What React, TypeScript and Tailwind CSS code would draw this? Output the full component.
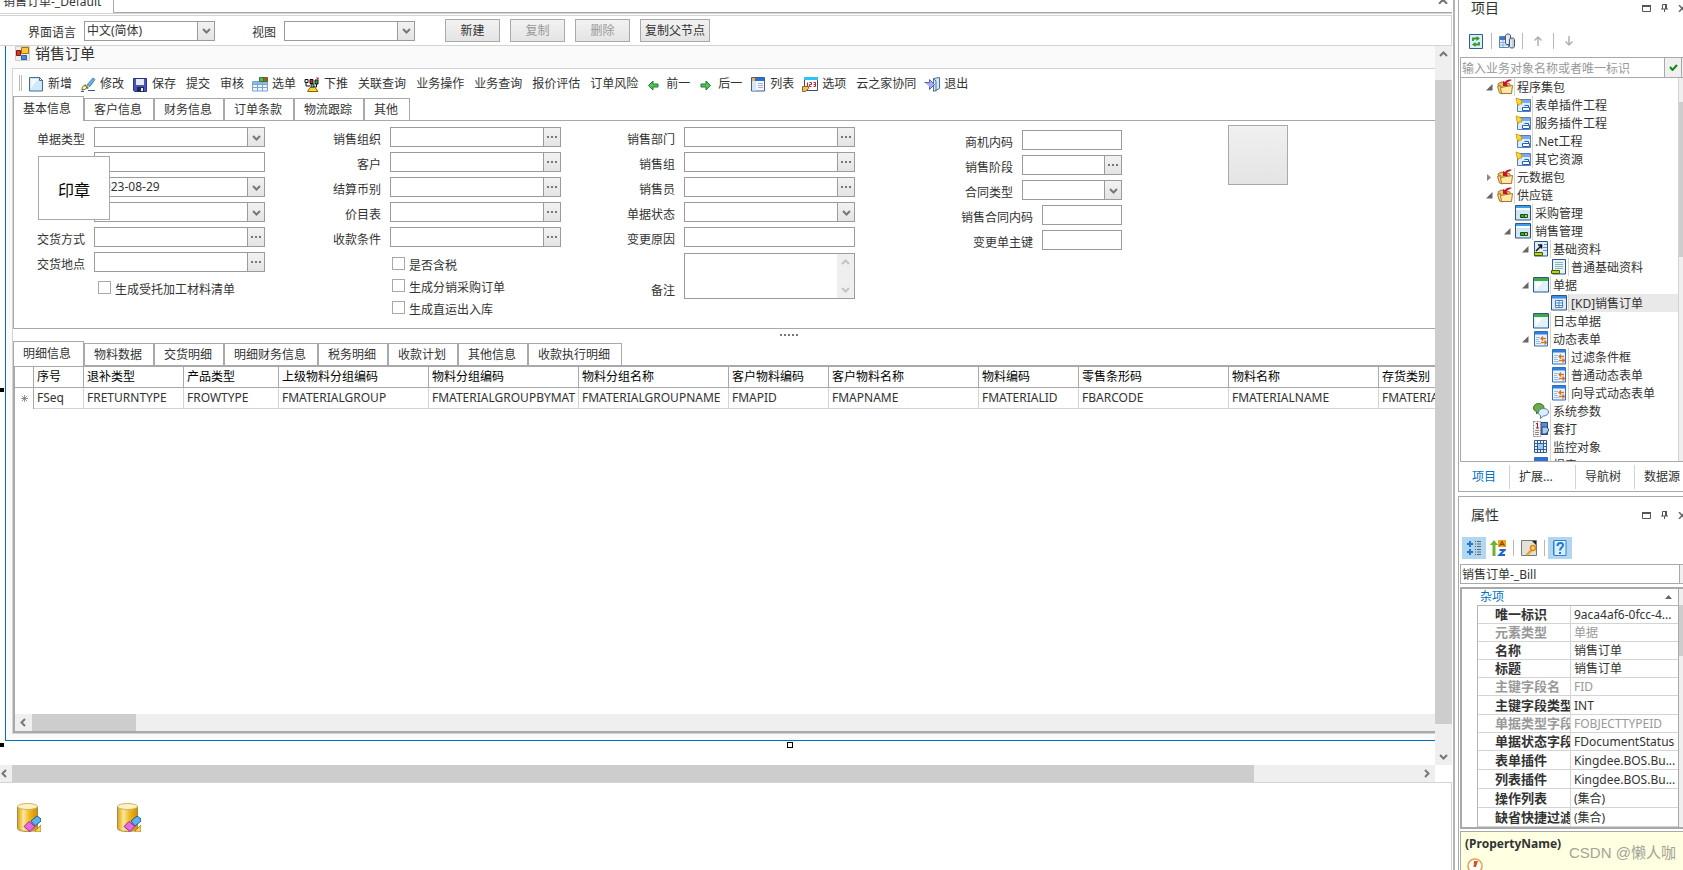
import React from "react";

/* ---------- icons ---------- */

type SvgProps = { children: React.ReactNode; box?: string; className?: string };

const Svg = ({ children, box = "0 0 16 16", className = "h-4 w-4" }: SvgProps) => (
  <svg viewBox={box} className={`${className} shrink-0`} aria-hidden="true">
    {children}
  </svg>
);

const icons: Record<string, React.ReactNode> = {
  page: (
    <Svg>
      <path d="M1.5 1.5h10l3 3v10.5h-13z" fill="#cfe8fb" stroke="#4b6a8c" />
      <path d="M3 3h7l-7 9z" fill="#f2faff" />
      <path d="M11.5 1.5v3h3z" fill="#fff" stroke="#4b6a8c" />
    </Svg>
  ),
  brush: (
    <Svg>
      <path d="M7 9l6-7 2 1.5-5 7z" fill="#6fb2d8" stroke="#3a6fa0" strokeWidth=".8" />
      <path d="M5 8l4 4-2 1-3-3z" fill="#4f8f3a" />
      <path d="M2 14c0-4 2-5 4-4 2 1 0 4-4 4z" fill="#fff2c0" stroke="#6b5a20" />
      <path d="M1 15.5h3M8 14.5h7" stroke="#3a5f95" />
    </Svg>
  ),
  save: (
    <Svg>
      <path d="M1.5 2.5h13v13h-12l-1-1z" fill="#4a55b8" stroke="#2b3480" />
      <path d="M4 3h8v6H4z" fill="#e4eafc" />
      <path d="M5 11h7v4.5H5z" fill="#20264f" />
      <path d="M9 12h2v3H9z" fill="#e8ecff" />
    </Svg>
  ),
  pick: (
    <Svg>
      <path d="M.5 5.5h15v9.5H.5z" fill="#eaf5ff" stroke="#7fa3cf" />
      <path d="M1 6h14v2H1z" fill="#8db9ee" />
      <path d="M.5 8.5h15M.5 11.5h15M5.5 5.5v9.5M10.5 5.5v9.5" stroke="#7fa3cf" fill="none" />
      <path d="M7.5 1.5h4v4h-4z" fill="#58b947" stroke="#2c7a2a" />
      <path d="M11.5 1.5h4v4h-4z" fill="#e23a2c" stroke="#2c7a2a" />
    </Svg>
  ),
  push: (
    <Svg>
      <path d="M1 3.5h3v3H1z" fill="#fff" stroke="#111" />
      <path d="M6 3.5h3v4H6z" fill="#e32a1c" stroke="#111" />
      <path d="M11 4h3v4h-3z" fill="#1fb43a" stroke="#111" />
      <path d="M2 7v3h4M7.5 8v4M12.5 8v3H9" stroke="#111" fill="none" />
      <path d="M7 8h3v3H7z" fill="#2ad2e6" stroke="#111" strokeWidth=".8" />
      <path d="M12 1l3 1-1 3z" fill="#c33" />
      <path d="M3.5 15.5L6 11.5h5l3 4z" fill="#ffd42a" stroke="#8a6500" />
    </Svg>
  ),
  prev: (
    <Svg>
      <path d="M2.5 9.500L7 5v3h5v3H7v3z" fill="#4fc45a" stroke="#1f7d2b" />
    </Svg>
  ),
  next: (
    <Svg>
      <path d="M12.500 9.500L8 5v3H3v3h5v3z" fill="#4fc45a" stroke="#1f7d2b" />
    </Svg>
  ),
  list: (
    <Svg>
      <path d="M1.5 1.5h13v13.5h-13z" fill="#f4f8fe" stroke="#3d5f93" />
      <path d="M2 2h12v3H2z" fill="#2f6fd0" />
      <path d="M2 2h3v3H2z" fill="#f6b53a" />
      <path d="M2 5h4v9.5H2z" fill="#d5e4f8" />
      <path d="M8 7.5h5M8 9.5h5M8 11.5h5" stroke="#9fb2cc" />
    </Svg>
  ),
  options: (
    <Svg>
      <path d="M2.5 1.5h13v13h-13z" fill="#fff" stroke="#2f4d7d" />
      <path d="M2 1h14v3H2z" fill="#2bc6f0" />
      <path d="M5.5 6.5v4M7.5 6.500h2v2h-2v2h2M11.5 6.500h2v4h-2M11.5 8.500h2" stroke="#c81e2a" fill="none" />
      <path d="M.5 10.500h6v2l-3 3h-3z" fill="#f0bf5a" stroke="#8d651c" />
    </Svg>
  ),
  exit: (
    <Svg>
      <path d="M9.5 2.500l6-1v11l-6 3z" fill="#d5ebfb" stroke="#4a6f9d" />
      <path d="M9.5 2.500L12 5v10.500" fill="none" stroke="#4a6f9d" />
      <path d="M.5 6.500h5v-3l5 5-5 5v-3" fill="#a9a9f0" stroke="#5a5fc8" />
    </Svg>
  ),
  form: (
    <Svg>
      <path d="M.5 .5h14v14H.5z" fill="#eee" stroke="#ccc" />
      <path d="M6.5 1.5h7v6h-7z" fill="#ffc83a" stroke="#a87400" />
      <path d="M1.5 4.5h4v5h-4z" fill="#d6362b" stroke="#7e1510" />
      <path d="M6.5 9.5h5v4h-5z" fill="#4a8be0" stroke="#2b60b0" />
    </Svg>
  ),
  refresh: (
    <Svg>
      <path d="M1.5 1.5h13v14h-13z" fill="#dcefff" stroke="#2e5f8a" />
      <path d="M5 8V5.500h4M11 9v2.500H7" stroke="#2e9a22" strokeWidth="1.800" fill="none" />
      <path d="M8.500 3v5L12 5.500zM7.500 9v5L4 11.500z" fill="#2e9a22" />
    </Svg>
  ),
  servers: (
    <Svg>
      <path d="M.5 3.5h9v11h-9z" fill="#e9f3ff" stroke="#5f83b8" />
      <path d="M1 4h8v3H1z" fill="#3c78cf" />
      <path d="M1 9.5h8M1 12h8M4 7v7" stroke="#8faedb" />
      <path d="M6.5 2.5c0-2 5-2 5 0v8c0 1.500-5 1.500-5 0z" fill="#d7e1ea" stroke="#44566c" />
      <path d="M10.5 6.500c0-2 5-2 5 0v7c0 2-5 2-5 0z" fill="#c2ceda" stroke="#44566c" />
      <path d="M8 3v7M12 7v7" stroke="#fff" />
    </Svg>
  ),
  up: (
    <Svg>
      <path d="M8 13V4M4.5 7.500L8 4l3.500 3.500" stroke="#b0b0b0" strokeWidth="1.500" fill="none" />
    </Svg>
  ),
  down: (
    <Svg>
      <path d="M8 3v9M4.5 8.500L8 12l3.500-3.500" stroke="#b0b0b0" strokeWidth="1.500" fill="none" />
    </Svg>
  ),
  folder: (
    <Svg>
      <path d="M1 5l3-2 9 2v9H3z" fill="#f3c55e" stroke="#a8742a" />
      <path d="M.5 7.500l3-1 2 8.500-3-1z" fill="#f9d987" stroke="#a8742a" />
      <path d="M3.500 8.500l12-2-1 8h-10z" fill="#ffe9a8" stroke="#a8742a" />
      <path d="M15 1c-3-1-6 0-7 2L6 2v5h5L9.500 4.500C11 2.500 13 2 15 1z" fill="#c8142a" />
    </Svg>
  ),
  plugin: (
    <Svg>
      <path d="M2.5 2.5h13v12h-13z" fill="#dcecff" stroke="#5b7fb5" />
      <path d="M3 3h12v3H3z" fill="#7fa8ea" />
      <path d="M7.5 10.500h7v3h-7zM9.500 8.500h4v2" fill="#fff" stroke="#1f5fc0" />
      <path d="M1 1l3 1 3 2-1 2 1 1H4l-1 2-1-3z" fill="#ffd92e" stroke="#b88c00" strokeWidth=".7" />
    </Svg>
  ),
  module: (
    <Svg>
      <path d="M.5 .5h15v14.500H.5z" fill="#d3e6f8" stroke="#2e5583" />
      <path d="M1 1h14v2H1z" fill="#3aa0ea" />
      <path d="M1 3h14v2H1z" fill="#f5fbff" />
      <path d="M5.5 9.500h4v3h-4z" fill="#2fa82f" stroke="#145214" />
      <path d="M9.500 9.500h3v3h-3z" fill="#e0c23a" stroke="#145214" />
    </Svg>
  ),
  base: (
    <Svg>
      <path d="M1.5 .5h13v14.500h-13z" fill="#dcecfa" stroke="#2e5583" />
      <path d="M11 3.500h3M10 6.500h4M10 9.500h4" stroke="#6f94bd" />
      <path d="M3 10l5-5M5 4h3.500v3.500" stroke="#111" strokeWidth="1.500" fill="none" />
      <path d="M1.500 11.500h8v3h-8z" fill="#b6d41c" stroke="#4a5d08" />
    </Svg>
  ),
  baseItem: (
    <Svg>
      <path d="M1.5 .5h13v14.500h-13z" fill="#e6f4ff" stroke="#2e5583" />
      <path d="M4 3.500h8M4 5.500h8M4 7.500h8M4 9.500h8" stroke="#8cb4a8" />
      <path d="M.5 11.500h8v3h-8z" fill="#b6d41c" stroke="#4a5d08" />
    </Svg>
  ),
  bill: (
    <Svg>
      <path d="M.5 .5h15v14.500H.5z" fill="#dff1fc" stroke="#2e5583" />
      <path d="M1 1h14v3H1z" fill="#43a847" />
      <path d="M2 5h8L3 13z" fill="#fafeff" />
    </Svg>
  ),
  billItem: (
    <Svg>
      <path d="M.5 .5h15v14.500H.5z" fill="#dceafb" stroke="#2e5583" />
      <path d="M1 1h14v2.500H1z" fill="#3d8fe0" />
      <path d="M4.500 5.500h7v7h-7zM4.500 8h7M4.500 10.500h7M8 5.500v7" fill="#fff" stroke="#4a83c8" />
    </Svg>
  ),
  dyn: (
    <Svg>
      <path d="M1.5 .5h13v14.500h-13z" fill="#eaf4ff" stroke="#2f6fc0" />
      <path d="M2 1h12v2.500H2z" fill="#2e7fe0" />
      <path d="M3 6.500h4M3 8.500h3M3 10.500h4M3 12.500h5" stroke="#9dbbe0" />
      <path d="M13 7.500H8M10 5.500l-2 2 2 2M8 11.500h5M11.500 9.500l2 2-2 2" stroke="#d9741a" strokeWidth="1.300" fill="none" />
    </Svg>
  ),
  chat: (
    <Svg>
      <path d="M5.5 .5c3 0 5.500 1.500 5.500 4s-2.500 4.500-5.500 4.500l-2 2V8.500C1.500 8 .5 6.500.5 5c0-2.500 2-4.500 5-4.500z" fill="#6bab49" stroke="#3d7325" />
      <path d="M10.5 5.500c3 0 5 1.500 5 3.500s-2 4-5 4l-3 2.500V12.500c-1.500-.5-2-1.500-2-3C5.500 7 7.500 5.500 10.500 5.500z" fill="#dcedfb" stroke="#4d7dab" />
    </Svg>
  ),
  print: (
    <Svg>
      <path d="M8 1.500h6.500v12H8z" fill="#5a8fd8" stroke="#24467c" />
      <path d="M9 6h5l2 3-3 4H9z" fill="#a9cbf2" stroke="#24467c" />
      <path d="M.5 .5h7v15h-7z" fill="#f5f5f5" stroke="#888" strokeDasharray="2 1" />
      <path d="M3 3l1.500-1v5M3 7h3" stroke="#b01030" fill="none" />
      <path d="M2 9.500h4M2 11.500h4M2 13.500h4" stroke="#888" />
    </Svg>
  ),
  monitor: (
    <Svg>
      <path d="M1.5 1.5h12v12h-12z" fill="#eef6ff" stroke="#2f5c94" />
      <path d="M1.5 4.500h12M1.500 7.500h12M1.500 10.500h12M4.500 1.500v12M7.500 1.500v12M10.500 1.500v12" stroke="#2f5c94" />
      <path d="M5 5h5v5H5z" fill="#9cc6f6" />
    </Svg>
  ),
  blue: (
    <Svg>
      <path d="M1.5 .5h13v14h-13z" fill="#eaf4ff" stroke="#2f6fc0" />
      <path d="M2 1h12v4H2z" fill="#2e6fe0" />
    </Svg>
  ),
  categorized: (
    <Svg>
      <path d="M1 4h6M4 1v6M1 12h6M4 9v6" stroke="#1f78d8" strokeWidth="2" />
      <path d="M9 1.500h1M9 4h1M9 6.500h1M9 9.500h1M9 12h1M9 14.500h1M11 1.500h4M11 4h4M11 6.500h4M11 9.500h4M11 12h4M11 14.500h4" stroke="#666" />
    </Svg>
  ),
  sort: (
    <Svg>
      <path d="M4 0l4 5H5.500v11h-3V5H0z" fill="#6cb52a" />
      <path d="M8 0h8v7H8z" fill="#f3a41c" />
      <path d="M9.500 6L12 1.500 14.500 6M10.500 4.500h3" stroke="#8a4b00" strokeWidth="1.200" fill="none" />
      <path d="M9.500 10h5l-5 5h5.500" stroke="#1d66c8" strokeWidth="2" fill="none" />
    </Svg>
  ),
  keyPage: (
    <Svg>
      <path d="M.5 .5h15v15H.5z" fill="#e2e0d8" stroke="#777" />
      <path d="M11 1h4v4z" fill="#222" />
      <path d="M10 9l-5 5 1 1.500 2-1 4-4z" fill="#f0a020" />
      <circle cx="12" cy="8" r="2.500" fill="#ffd27a" stroke="#d88a18" strokeWidth="1.500" />
    </Svg>
  ),
  help: (
    <Svg>
      <path d="M2 .5h12v15H2z" fill="#dceeff" stroke="#2b84dc" />
      <path d="M1.500 1v14" stroke="#2b84dc" />
      <path d="M5.500 6c0-4 6-4 5.500-.5C10.800 7.500 8 7.500 8 10.500" stroke="#1878dc" strokeWidth="2" fill="none" />
      <path d="M7 12h2v2H7z" fill="#1878dc" />
    </Svg>
  ),
};

const Chevron = ({ dir, light }: { dir: "up" | "down" | "left" | "right"; light?: boolean }) => {
  const paths = {
    up: "M1 6l3.500-3.500L8 6",
    down: "M1 3l3.500 3.500L8 3",
    left: "M6 1L2.500 4.500 6 8",
    right: "M3 1l3.500 3.500L3 8",
  };
  return (
    <Svg box="0 0 9 9" className="h-[9px] w-[9px]">
      <path d={paths[dir]} fill="none" stroke={light ? "#c4c4c4" : "#777"} strokeWidth="2" />
    </Svg>
  );
};

const Database = () => (
  <svg viewBox="0 0 24 29" className="h-[29px] w-6" aria-hidden="true">
    <defs>
      <linearGradient id="gold">
        <stop offset="0" stopColor="#e0a010" />
        <stop offset=".3" stopColor="#fbe79a" />
        <stop offset=".6" stopColor="#f0b820" />
        <stop offset="1" stopColor="#d09000" />
      </linearGradient>
    </defs>
    <path d="M.5 3.500v22c0 4 20 4 20 0v-22z" fill="url(#gold)" stroke="#a88a48" />
    <ellipse cx="10.500" cy="3.500" rx="10" ry="3" fill="#fff3c0" stroke="#c9b070" />
    <path d="M14 18l6-5 4 3v2l-6 5z" fill="#5fb0ee" stroke="#1c5c9c" />
    <path d="M18 28l6-6v7h-6z" fill="#f3d26a" stroke="#b78b20" />
    <path d="M7 23.500l5-5 6 5-5 5z" fill="#e66ae0" stroke="#a02aa0" />
  </svg>
);

/* ---------- form controls ---------- */

const boxClass = "flex h-5 border border-[#9b9b9b] bg-white";
const cellClass =
  "flex w-[17px] shrink-0 items-center justify-center border-l border-[#9b9b9b] bg-linear-to-b from-[#f2f2f2] to-[#e4e4e4]";

type Kind = "text" | "select" | "lookup" | "date";

const Control = ({ id, kind, width, value = "", name }: { id: string; kind: Kind; width: string; value?: string; name?: string }) => {
  const inner = "min-w-0 flex-1 appearance-none bg-transparent px-[2px] leading-[18px] outline-none";
  return (
    <div className={`${boxClass} ${width}`}>
      {kind === "select" ? (
        <select id={id} aria-label={name} className={inner} defaultValue={value}>
          <option>{value}</option>
        </select>
      ) : (
        <input id={id} aria-label={name} className={inner} defaultValue={value} />
      )}
      {(kind === "select" || kind === "date") && (
        <span className={cellClass}>
          <Chevron dir="down" />
        </span>
      )}
      {kind === "lookup" && (
        <button type="button" aria-label="…" className={cellClass}>
          <Svg box="0 0 10 2" className="h-[2px] w-[10px]">
            <path d="M0 0h2v2H0zM4 0h2v2H4zM8 0h2v2H8z" fill="#777" />
          </Svg>
        </button>
      )}
    </div>
  );
};

type FieldDef = { label: string; kind: Kind; value?: string; narrow?: boolean; name?: string };

const Field = ({ def, id, labelWidth, width }: { def: FieldDef; id: string; labelWidth: string; width: string }) => (
  <div className="flex h-5">
    <label htmlFor={id} className={`${labelWidth} shrink-0 pt-[5px] pr-[9px] text-right leading-4`}>
      {def.label}
    </label>
    <Control id={id} kind={def.kind} width={width} value={def.value} name={def.name} />
  </div>
);

const Check = ({ label }: { label: string }) => (
  <label className="flex h-[13px] items-start gap-1">
    <input type="checkbox" className="h-[13px] w-[13px] appearance-none border border-[#a8a8a8] bg-white" />
    <span className="pt-px leading-4">{label}</span>
  </label>
);

const col1: FieldDef[] = [
  { label: "单据类型", kind: "select" },
  { label: "", kind: "text", name: "单据编号" },
  { label: "", kind: "date", value: "2023-08-29", name: "日期" },
  { label: "", kind: "select", name: "类型" },
  { label: "交货方式", kind: "lookup" },
  { label: "交货地点", kind: "lookup" },
];
const col2: FieldDef[] = [
  { label: "销售组织", kind: "lookup" },
  { label: "客户", kind: "lookup" },
  { label: "结算币别", kind: "lookup" },
  { label: "价目表", kind: "lookup" },
  { label: "收款条件", kind: "lookup" },
];
const col3: FieldDef[] = [
  { label: "销售部门", kind: "lookup" },
  { label: "销售组", kind: "lookup" },
  { label: "销售员", kind: "lookup" },
  { label: "单据状态", kind: "select" },
  { label: "变更原因", kind: "text" },
];
const col4: FieldDef[] = [
  { label: "商机内码", kind: "text" },
  { label: "销售阶段", kind: "lookup" },
  { label: "合同类型", kind: "select" },
  { label: "销售合同内码", kind: "text", narrow: true },
  { label: "变更单主键", kind: "text", narrow: true },
];

/* ---------- tabs, toolbar, grid ---------- */

const TabStrip = ({ tabs }: { tabs: string[] }) => (
  <div role="tablist" className="flex h-[25px] shrink-0 items-end">
    {tabs.map((tab, i) => (
      <button
        key={tab}
        type="button"
        role="tab"
        aria-selected={i === 0}
        className={
          i === 0
            ? "h-[25px] shrink-0 border-x border-t border-[#a9a9a9] bg-white pr-3 pl-[9px] leading-6"
            : "h-[23px] shrink-0 border border-[#a9a9a9] bg-white pr-[11px] pl-[9px] leading-[22px]"
        }
      >
        {tab}
      </button>
    ))}
    <div className="h-px flex-1 bg-[#a9a9a9]" />
  </div>
);

const tools: [string, string?][] = [
  ["新增", "page"],
  ["修改", "brush"],
  ["保存", "save"],
  ["提交"],
  ["审核"],
  ["选单", "pick"],
  ["下推", "push"],
  ["关联查询"],
  ["业务操作"],
  ["业务查询"],
  ["报价评估"],
  ["订单风险"],
  ["前一", "prev"],
  ["后一", "next"],
  ["列表", "list"],
  ["选项", "options"],
  ["云之家协同"],
  ["退出", "exit"],
];

const columns: [string, string, string][] = [
  ["序号", "FSeq", "w-[50px]"],
  ["退补类型", "FRETURNTYPE", "w-[100px]"],
  ["产品类型", "FROWTYPE", "w-[95px]"],
  ["上级物料分组编码", "FMATERIALGROUP", "w-[150px]"],
  ["物料分组编码", "FMATERIALGROUPBYMAT", "w-[150px]"],
  ["物料分组名称", "FMATERIALGROUPNAME", "w-[150px]"],
  ["客户物料编码", "FMAPID", "w-[100px]"],
  ["客户物料名称", "FMAPNAME", "w-[150px]"],
  ["物料编码", "FMATERIALID", "w-[100px]"],
  ["零售条形码", "FBARCODE", "w-[150px]"],
  ["物料名称", "FMATERIALNAME", "w-[150px]"],
  ["存货类别", "FMATERIALTYPE", "w-[150px]"],
];

const EntryGrid = () => (
  <div className="flex min-h-0 flex-1 flex-col overflow-hidden border-t border-b-2 border-l-2 border-[#a9a9a9] bg-white">
    <div className="min-h-0 flex-1 overflow-hidden">
      <table className="w-[1514px] table-fixed border-separate border-spacing-0 text-left">
        <thead>
          <tr className="text-black">
            <th className="h-[21px] w-[19px] border-r border-b border-[#a9a9a9]" />
            {columns.map(([title, , width]) => (
              <th key={title} className={`${width} overflow-hidden border-r border-b border-[#a9a9a9] px-[3px] font-normal whitespace-nowrap`}>
                {title}
              </th>
            ))}
          </tr>
        </thead>
        <tbody>
          <tr>
            <td className="h-[21px] border-r border-[#a9a9a9]">
              <Svg box="0 0 9 9" className="ml-[6px] h-[7px] w-[7px]">
                <path d="M4.500 0v9M0 4.500h9M1 1l7 7M8 1L1 8" stroke="#777" />
              </Svg>
            </td>
            {columns.map(([title, field]) => (
              <td key={title} className="overflow-hidden border-r border-b border-[#d4d4d4] px-[3px] whitespace-nowrap">
                {field}
              </td>
            ))}
          </tr>
        </tbody>
      </table>
    </div>
    <div className="flex h-[17px] shrink-0 bg-[#efefef]">
      <span className="flex w-[17px] items-center justify-center">
        <Chevron dir="left" />
      </span>
      <span className="w-[104px] bg-[#cdcdcd]" />
    </div>
  </div>
);

const BillForm = () => (
  <div className="relative flex h-[208px] shrink-0 border-b border-l border-[#a9a9a9]">
    <div className="flex shrink-0 flex-col gap-[5px] pt-[6px]">
      {col1.map((def, i) => (
        <Field key={i} def={def} id={`a${i}`} labelWidth="w-20" width="w-[171px]" />
      ))}
      <div className="pt-1 pl-[84px]">
        <Check label="生成受托加工材料清单" />
      </div>
    </div>
    <div className="flex shrink-0 flex-col gap-[5px] pt-[6px]">
      {col2.map((def, i) => (
        <Field key={i} def={def} id={`b${i}`} labelWidth="w-[125px]" width="w-[171px]" />
      ))}
      <div className="flex flex-col gap-[9px] pt-[5px] pl-[127px]">
        <Check label="是否含税" />
        <Check label="生成分销采购订单" />
        <Check label="生成直运出入库" />
      </div>
    </div>
    <div className="flex shrink-0 flex-col gap-[5px] pt-[6px]">
      {col3.map((def, i) => (
        <Field key={i} def={def} id={`c${i}`} labelWidth="w-[123px]" width="w-[171px]" />
      ))}
      <div className="flex items-end pt-px">
        <label htmlFor="remark" className="w-[123px] pr-[9px] text-right leading-4">
          备注
        </label>
        <div className="flex h-[46px] w-[171px] border border-[#9b9b9b]">
          <textarea id="remark" className="min-w-0 flex-1 resize-none outline-none" />
          <span className="flex w-[17px] flex-col items-center justify-between bg-[#efefef] py-1">
            <Chevron dir="up" light />
            <Chevron dir="down" light />
          </span>
        </div>
      </div>
    </div>
    <div className="flex shrink-0 flex-col gap-[5px] pt-[9px]">
      {col4.map((def, i) => (
        <Field
          key={i}
          def={def}
          id={`d${i}`}
          labelWidth={def.narrow ? "w-[187px]" : "w-[167px]"}
          width={def.narrow ? "w-20" : "w-[100px]"}
        />
      ))}
    </div>
    <button
      type="button"
      aria-label="图片"
      className="mt-1 ml-[106px] h-[60px] w-[60px] shrink-0 border border-[#a9a9a9] bg-linear-to-b from-[#f0f0f0] to-[#e4e4e4]"
    />
    <div className="absolute top-[35px] left-6 flex h-16 w-[72px] items-center justify-center border border-[#a9a9a9] bg-white pt-1 text-base text-black">
      印章
    </div>
  </div>
);

const pushButton = "h-[23px] shrink-0 border border-[#a9a9a9] bg-linear-to-b from-[#f2f2f2] to-[#e4e4e4] leading-[22px]";

const Designer = () => (
  <main className="flex min-w-0 flex-1 flex-col border-r-2 border-[#b4b4b4] pr-px">
    <div className="flex h-[13px] shrink-0">
      <div className="flex w-[114px] items-end overflow-hidden border-r border-[#a9a9a9] pb-[3px] pl-[3px] leading-4 whitespace-nowrap">销售订单-_Default</div>
      <div className="flex flex-1 items-start justify-end overflow-hidden border-b border-[#a9a9a9] pr-1">
        <Svg box="0 5 10 4" className="h-1 w-[10px]">
          <path d="M1 0l8 9M9 0L1 9" stroke="#777" strokeWidth="2" />
        </Svg>
      </div>
    </div>
    <div className="h-px shrink-0 bg-[#d4d4d4]" />
    <div className="mt-px flex h-[31px] shrink-0 items-center border-y border-r border-[#d4d4d4]">
      <label htmlFor="lang" className="w-[84px] pt-1 pr-2 text-right">
        界面语言
      </label>
      <Control id="lang" kind="select" width="w-[131px]" value="中文(简体)" />
      <label htmlFor="view" className="w-[69px] pt-1 pr-2 text-right">
        视图
      </label>
      <Control id="view" kind="select" width="w-[131px]" />
      <div className="ml-[30px] flex gap-[10px]">
        <button type="button" className={`${pushButton} w-[55px]`}>新建</button>
        <button type="button" disabled className={`${pushButton} w-[55px] text-[#999]`}>复制</button>
        <button type="button" disabled className={`${pushButton} w-[55px] text-[#999]`}>删除</button>
        <button type="button" className={`${pushButton} w-[70px]`}>复制父节点</button>
      </div>
    </div>

    <div className="flex min-h-0 flex-1">
      <div className="relative flex min-w-0 flex-1 flex-col overflow-hidden pb-6 pl-[5px]">
        <div className="flex min-h-0 flex-1 flex-col border-b border-l border-[#0072c6] bg-[#fafafa] pb-[6px] pl-[6px]">
          <div className="flex h-[22px] shrink-0 items-start gap-1 pl-[3px]">
            {icons.form}
            <h1 className="text-[15px] leading-[14px]">销售订单</h1>
          </div>
          <div className="flex min-h-0 flex-1 flex-col border-t border-b border-l border-[#d4d4d4] bg-white">
            <div role="toolbar" className="flex h-[27px] shrink-0 items-center overflow-hidden pl-[6px]">
              <span className="mr-[3px] h-4 w-[3px] shrink-0 border-x border-[#bbb]" />
              {tools.map(([label, icon]) => (
                <button
                  key={label}
                  type="button"
                  className={`flex shrink-0 items-center gap-1 pt-[3px] pr-[5px] leading-5 ${icon ? "pl-[3px]" : "pl-[5px]"}`}
                >
                  {icon && icons[icon]}
                  {label}
                </button>
              ))}
            </div>
            <TabStrip tabs={["基本信息", "客户信息", "财务信息", "订单条款", "物流跟踪", "其他"]} />
            <BillForm />
            <div className="flex h-3 shrink-0 items-center justify-center">
              <Svg box="0 0 18 2" className="mr-[-130px] h-[2px] w-[18px]">
                <path d="M0 0h2v2H0zM4 0h2v2H4zM8 0h2v2H8zM12 0h2v2h-2zM16 0h2v2h-2z" fill="#777" />
              </Svg>
            </div>
            <TabStrip tabs={["明细信息", "物料数据", "交货明细", "明细财务信息", "税务明细", "收款计划", "其他信息", "收款执行明细"]} />
            <EntryGrid />
          </div>
        </div>
        <span className="absolute top-[342px] left-0 h-1 w-1 bg-black" />
        <span className="absolute bottom-[18px] left-0 h-1 w-1 bg-black" />
        <span className="absolute bottom-[17px] left-[787px] h-[6px] w-[6px] border border-black bg-white" />
      </div>
      <div className="flex w-[17px] shrink-0 flex-col items-center bg-[#efefef]">
        <span className="flex h-[34px] pt-1">
          <Chevron dir="up" />
        </span>
        <span className="w-full flex-1 bg-[#cdcdcd]" />
        <span className="flex h-[41px] items-end pb-1">
          <Chevron dir="down" />
        </span>
      </div>
    </div>
    <div className="mr-[17px] flex h-[17px] shrink-0 items-center bg-[#efefef]">
      <span className="w-3">
        <Chevron dir="left" />
      </span>
      <span className="h-full flex-1 bg-[#cdcdcd]" />
      <span className="flex w-[181px] justify-end pr-1">
        <Chevron dir="right" />
      </span>
    </div>
    <div className="flex h-[88px] shrink-0 gap-[76px] border-t border-r border-[#d4d4d4] pt-5 pl-[17px]">
      <Database />
      <Database />
    </div>
  </main>
);

/* ---------- side panels ---------- */

const PanelTitle = ({ title }: { title: string }) => (
  <div className="flex items-center justify-between pr-[9px] pl-3">
    <h2 className="text-sm leading-4">{title}</h2>
    <div className="flex items-center gap-[10px]">
      <button type="button" aria-label="最大化">
        <Svg box="0 0 9 7" className="h-[7px] w-[9px]">
          <path d="M.5 1h8v5.500h-8z" fill="none" stroke="#555" />
          <path d="M0 0h9v2H0z" fill="#555" />
        </Svg>
      </button>
      <button type="button" aria-label="固定">
        <Svg box="0 0 7 8" className="h-2 w-[7px]">
          <path d="M1.500 5V.500h4V5M0 5h7M3.500 5v3" fill="none" stroke="#555" />
          <path d="M4 0h2v5H4z" fill="#555" />
        </Svg>
      </button>
      <button type="button" aria-label="关闭">
        <Svg box="0 0 8 7" className="h-[7px] w-2">
          <path d="M1 0l6 7M7 0L1 7" stroke="#666" strokeWidth="1.500" />
        </Svg>
      </button>
    </div>
  </div>
);

type Node = { label: string; icon: string; level: 1 | 2 | 3 | 4; open?: boolean; closed?: boolean; selected?: boolean };

const nodes: Node[] = [
  { label: "程序集包", icon: "folder", level: 1, open: true },
  { label: "表单插件工程", icon: "plugin", level: 2 },
  { label: "服务插件工程", icon: "plugin", level: 2 },
  { label: ".Net工程", icon: "plugin", level: 2 },
  { label: "其它资源", icon: "plugin", level: 2 },
  { label: "元数据包", icon: "folder", level: 1, closed: true },
  { label: "供应链", icon: "folder", level: 1, open: true },
  { label: "采购管理", icon: "module", level: 2 },
  { label: "销售管理", icon: "module", level: 2, open: true },
  { label: "基础资料", icon: "base", level: 3, open: true },
  { label: "普通基础资料", icon: "baseItem", level: 4 },
  { label: "单据", icon: "bill", level: 3, open: true },
  { label: "[KD]销售订单", icon: "billItem", level: 4, selected: true },
  { label: "日志单据", icon: "bill", level: 3 },
  { label: "动态表单", icon: "dyn", level: 3, open: true },
  { label: "过滤条件框", icon: "dyn", level: 4 },
  { label: "普通动态表单", icon: "dyn", level: 4 },
  { label: "向导式动态表单", icon: "dyn", level: 4 },
  { label: "系统参数", icon: "chat", level: 3 },
  { label: "套打", icon: "print", level: 3 },
  { label: "监控对象", icon: "monitor", level: 3 },
  { label: "报表", icon: "blue", level: 3 },
];

const indent = { 1: "pl-[23px]", 2: "pl-[41px]", 3: "pl-[59px]", 4: "pl-[77px]" };

const Tree = () => (
  <ul role="tree" className="min-w-0 flex-1 overflow-hidden">
    {nodes.map((n) => (
      <li key={n.label} role="treeitem" aria-selected={!!n.selected} className={`flex h-[18px] items-center ${indent[n.level]}`}>
        <span className="w-[13px] shrink-0">
          {(n.open || n.closed) && (
            <Svg box="0 0 7 7" className="ml-[2px] h-[7px] w-[7px]">
              <path d={n.open ? "M6.500 0v6.500H0z" : "M1 0l4 3.500L1 7z"} fill={n.open ? "#666" : "#888"} />
            </Svg>
          )}
        </span>
        {icons[n.icon]}
        <span
          className={`ml-px h-[18px] flex-1 border-l border-[#d4d4d4] pl-[2px] leading-5 whitespace-nowrap ${n.selected ? "bg-[#e9e9e9]" : ""}`}
        >
          {n.label}
        </span>
      </li>
    ))}
  </ul>
);

const Sep = () => <span className="h-4 w-px bg-[#b8b8b8]" />;

const ProjectPanel = () => (
  <section className="flex min-h-0 flex-1 flex-col overflow-hidden border-b border-l border-[#a9a9a9]">
    <div className="flex min-h-0 w-[calc(100%+12px)] flex-1 flex-col">
      <PanelTitle title="项目" />
      <div className="flex h-[41px] shrink-0 items-center gap-[7px] pt-2 pl-[9px]">
        <button type="button" aria-label="刷新">{icons.refresh}</button>
        <Sep />
        <button type="button" aria-label="数据中心">{icons.servers}</button>
        <Sep />
        <button type="button" aria-label="上移">{icons.up}</button>
        <Sep />
        <button type="button" aria-label="下移">{icons.down}</button>
      </div>
      <div className="ml-px flex h-[21px] shrink-0 border-y border-l border-[#a9a9a9]">
        <input
          aria-label="搜索业务对象"
          placeholder="输入业务对象名称或者唯一标识"
          className="min-w-0 flex-1 px-px pt-[2px] outline-none placeholder:text-[#999]"
        />
        <button type="button" aria-label="确定" className="flex w-[17px] items-center justify-center border-l border-[#a9a9a9] bg-[#f0f0f0]">
          <Svg box="0 0 9 7" className="h-[7px] w-[9px]">
            <path d="M1 3l2.500 3L8 1" fill="none" stroke="#128a12" strokeWidth="2" />
          </Svg>
        </button>
        <span className="w-[14px] border-l border-[#a9a9a9] bg-[#f0f0f0]" />
      </div>
      <div className="ml-px flex min-h-0 flex-1 overflow-hidden border-b border-l border-[#a9a9a9]">
        <Tree />
        <div className="flex w-[17px] flex-col border-l border-[#d4d4d4] bg-[#efefef] pt-6">
          <span className="h-[155px] bg-[#cdcdcd]" />
        </div>
      </div>
      <div role="tablist" className="flex h-[29px] shrink-0 items-center leading-6">
        <button type="button" role="tab" aria-selected="true" className="w-[51px] border-r border-[#d4d4d4] text-[#0072c6]">项目</button>
        <button type="button" role="tab" aria-selected="false" className="w-[66px] border-r border-[#d4d4d4] pl-[9px] text-left">扩展...</button>
        <button type="button" role="tab" aria-selected="false" className="w-[59px] border-r border-[#d4d4d4] pl-[9px] text-left">导航树</button>
        <button type="button" role="tab" aria-selected="false" className="pl-[9px]">数据源</button>
      </div>
    </div>
  </section>
);

type Prop = { name: string; value: string; readOnly?: boolean; tall?: boolean };

const props: Prop[] = [
  { name: "唯一标识", value: "9aca4af6-0fcc-4..." },
  { name: "元素类型", value: "单据", readOnly: true },
  { name: "名称", value: "销售订单" },
  { name: "标题", value: "销售订单" },
  { name: "主键字段名", value: "FID", readOnly: true },
  { name: "主键字段类型", value: "INT", tall: true },
  { name: "单据类型字段", value: "FOBJECTTYPEID", readOnly: true },
  { name: "单据状态字段", value: "FDocumentStatus" },
  { name: "表单插件", value: "Kingdee.BOS.Bu...", tall: true },
  { name: "列表插件", value: "Kingdee.BOS.Bu...", tall: true },
  { name: "操作列表", value: "(集合)", tall: true },
  { name: "缺省快捷过滤", value: "(集合)", tall: true },
];

const PropertyPanel = () => (
  <section className="mt-1 flex h-[374px] shrink-0 flex-col overflow-hidden border-t border-l border-[#a9a9a9]">
    <div className="flex min-h-0 w-[calc(100%+12px)] flex-1 flex-col pt-[10px]">
      <PanelTitle title="属性" />
      <div className="mt-[14px] flex h-[22px] shrink-0 items-center pl-[3px]">
        <button type="button" aria-label="按分类" className="flex h-[22px] w-6 items-center justify-center bg-[#b0d6f0]">{icons.categorized}</button>
        <button type="button" aria-label="按字母" className="mx-1">{icons.sort}</button>
        <span className="mr-[7px] ml-[3px] h-4 w-px bg-[#b8b8b8]" />
        <button type="button" aria-label="属性页" className="mr-[7px]">{icons.keyPage}</button>
        <span className="mr-[3px] h-4 w-px bg-[#b8b8b8]" />
        <button type="button" aria-label="说明" className="flex h-[22px] w-6 items-center justify-center bg-[#b0d6f0]">{icons.help}</button>
      </div>
      <div className="mt-[5px] ml-px flex h-5 shrink-0 border border-[#a9a9a9]">
        <input aria-label="对象" defaultValue="销售订单-_Bill" className="min-w-0 flex-1 px-px pt-px outline-none" />
        <span className="w-[15px] border-l border-[#a9a9a9] bg-[#f0f0f0]" />
      </div>
      <div className="mt-[3px] ml-px flex min-h-0 flex-1 overflow-hidden border-y-2 border-l-2 border-[#a9a9a9]">
        <div className="min-w-0 flex-1">
          <div className="flex h-4 items-center justify-between pr-[6px] pl-[18px] text-[#0072c6]">
            <span>杂项</span>
            <Svg box="0 0 7 4" className="h-1 w-[7px]">
              <path d="M0 4l3.500-4L7 4z" fill="#666" />
            </Svg>
          </div>
          <div className="pl-[15px]">
            <table className="w-full table-fixed border-separate border-spacing-0 border-t border-l border-[#b4b4b4] text-left">
              <tbody>
                {props.map((p) => (
                  <tr key={p.name} className={p.readOnly ? "text-[#999]" : ""}>
                    <th
                      className={`${p.tall ? "h-[19px]" : "h-[18px]"} w-[93px] overflow-hidden border-r border-b border-[#d4d4d4] p-0 pl-[17px] text-[13px] leading-[17px] font-bold whitespace-nowrap`}
                    >
                      {p.name}
                    </th>
                    <td className="overflow-hidden border-b border-[#d4d4d4] p-0 pl-[3px] leading-[17px] whitespace-nowrap">{p.value}</td>
                  </tr>
                ))}
              </tbody>
            </table>
          </div>
        </div>
        <div className="flex w-[17px] flex-col border-l border-[#a9a9a9] bg-[#efefef] pt-4">
          <span className="h-[51px] bg-[#cdcdcd]" />
        </div>
      </div>
      <div className="mt-[2px] ml-px flex h-[39px] shrink-0 flex-col overflow-hidden border-t border-l border-[#a9a9a9] bg-[#ffffe1] pl-1">
        <div className="flex items-start">
          <strong className="w-[104px] pt-1">(PropertyName)</strong>
          <span className="pt-[9px] font-['Liberation_Sans','Noto_Sans_CJK_SC',sans-serif] text-[15px] leading-6 whitespace-nowrap text-[#a3a398]">
            CSDN @懒人咖
          </span>
        </div>
        <Svg className="-mt-[7px] ml-[2px] h-4 w-4">
          <circle cx="8" cy="8" r="7" fill="#fff" stroke="#e8a050" strokeWidth="1.500" />
          <path d="M7 3h4L9 9H6.500z" fill="#d8541a" />
        </Svg>
      </div>
    </div>
  </section>
);

export default function App() {
  return (
    <div className="flex h-screen overflow-hidden bg-white font-['Noto_Sans','Noto_Sans_CJK_SC',sans-serif] text-xs text-[#333]">
      <Designer />
      <aside className="ml-[3px] flex w-[225px] shrink-0 flex-col">
        <ProjectPanel />
        <PropertyPanel />
      </aside>
    </div>
  );
}
